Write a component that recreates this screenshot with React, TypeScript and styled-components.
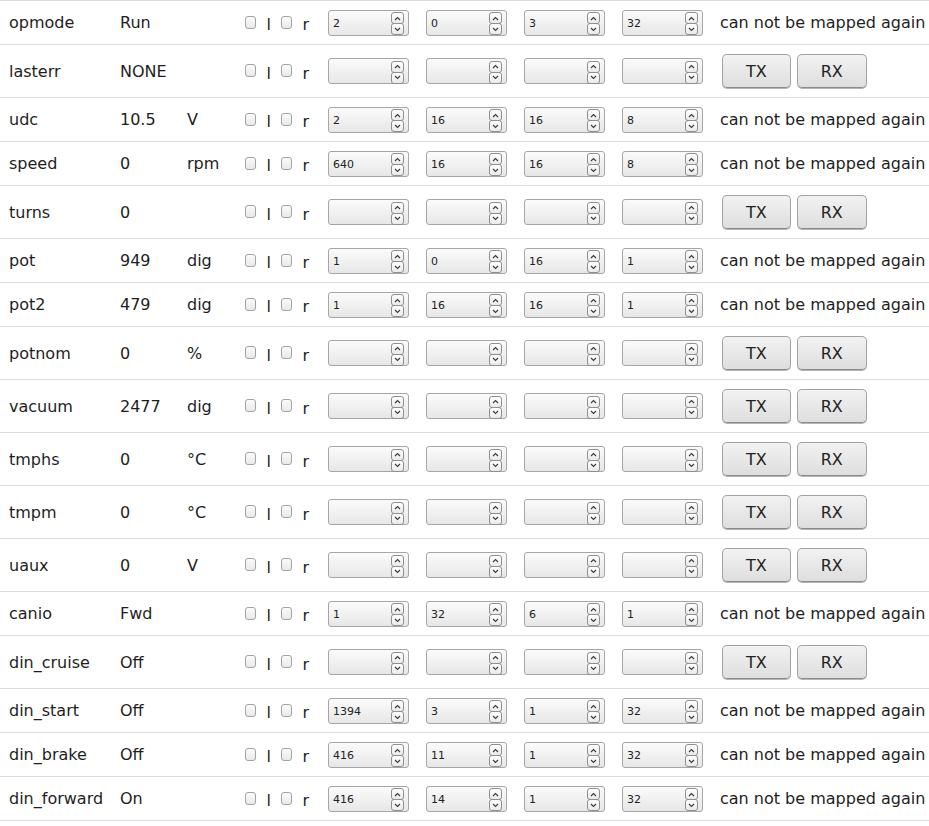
import React from "react";
import styled, { createGlobalStyle } from "styled-components";

const Global = createGlobalStyle`
  html, body { margin: 0; padding: 0; background: #fff; }
  body {
    font-family: "DejaVu Sans", "Noto Sans", sans-serif;
    font-size: 16px;
    color: #1e1e1e;
  }
`;

type Param = {
  name: string;
  value: string;
  unit: string;
  map?: [string, string, string, string];
};

const params: Param[] = [
  { name: "opmode", value: "Run", unit: "", map: ["2", "0", "3", "32"] },
  { name: "lasterr", value: "NONE", unit: "" },
  { name: "udc", value: "10.5", unit: "V", map: ["2", "16", "16", "8"] },
  { name: "speed", value: "0", unit: "rpm", map: ["640", "16", "16", "8"] },
  { name: "turns", value: "0", unit: "" },
  { name: "pot", value: "949", unit: "dig", map: ["1", "0", "16", "1"] },
  { name: "pot2", value: "479", unit: "dig", map: ["1", "16", "16", "1"] },
  { name: "potnom", value: "0", unit: "%" },
  { name: "vacuum", value: "2477", unit: "dig" },
  { name: "tmphs", value: "0", unit: "°C" },
  { name: "tmpm", value: "0", unit: "°C" },
  { name: "uaux", value: "0", unit: "V" },
  { name: "canio", value: "Fwd", unit: "", map: ["1", "32", "6", "1"] },
  { name: "din_cruise", value: "Off", unit: "" },
  { name: "din_start", value: "Off", unit: "", map: ["1394", "3", "1", "32"] },
  { name: "din_brake", value: "Off", unit: "", map: ["416", "11", "1", "32"] },
  { name: "din_forward", value: "On", unit: "", map: ["416", "14", "1", "32"] },
];

const Table = styled.div`
  width: 929px;
  border-top: 1px solid #dcdcdc;
`;

const Row = styled.div<{ $tall: boolean }>`
  display: grid;
  grid-template-columns: 111px 67px 58px 83px 98px 98px 98px 98px 1fr;
  align-items: center;
  height: ${(p) => (p.$tall ? 52 : 43)}px;
  border-bottom: 1px solid #dcdcdc;
`;

const Cell = styled.div`
  padding-left: 9px;
  white-space: nowrap;
  display: flex;
  align-items: center;
`;

const FlagCell = styled.div`
  padding-left: 9px;
  display: flex;
  align-items: center;
  height: 100%;
`;

const Check = styled.span`
  display: inline-block;
  box-sizing: border-box;
  width: 13px;
  height: 13px;
  border: 1px solid #a3a3a3;
  border-radius: 3px;
  background: linear-gradient(#fbfbfb, #e9e9e9);
  margin-top: -1px;
`;

const FlagLabel = styled.span`
  margin: 5px 10px 0 10px;
  line-height: 1;
`;

const Spin = styled.div`
  box-sizing: border-box;
  width: 81px;
  height: 26px;
  border: 1px solid #a6a6a6;
  border-radius: 3px;
  background: linear-gradient(#fbfbfb, #e7e7e7);
  display: flex;
  align-items: center;
  padding: 0 4px 0 4px;
`;

const SpinValue = styled.span`
  flex: 1;
  font-size: 11px;
  color: #222;
  padding-top: 1px;
`;

const Arrows = styled.div`
  display: flex;
  flex-direction: column;
  margin-top: 2px;
`;

const ArrowBox = styled.span`
  box-sizing: border-box;
  width: 13px;
  height: 12px;
  border: 1px solid #8f8f8f;
  border-radius: 3px;
  background: linear-gradient(#ffffff, #eaeaea);
  display: flex;
  align-items: center;
  justify-content: center;
  & + & {
    margin-top: -1px;
  }
`;

const Btn = styled.button`
  box-sizing: border-box;
  height: 34px;
  padding: 0 23px;
  font-family: "DejaVu Sans", sans-serif;
  font-size: 16px;
  color: #222;
  border: 1px solid #a2a2a2;
  border-bottom-color: #8a8a8a;
  border-radius: 5px;
  background: linear-gradient(#f2f2f2, #dedede);
  box-shadow: 0 1px 0 #b5b5b5;
  margin-left: 2px;
  margin-right: 4px;
  cursor: pointer;
`;

const Note = styled.span``;

function Chevron({ up }: { up: boolean }) {
  return (
    <svg width="7" height="5" viewBox="0 0 7 5">
      <polyline
        points={up ? "1,4 3.5,1.5 6,4" : "1,1 3.5,3.5 6,1"}
        fill="none"
        stroke="#3a3a3a"
        strokeWidth="1.1"
      />
    </svg>
  );
}

function Spinner({ value }: { value?: string }) {
  return (
    <Spin>
      <SpinValue>{value ?? ""}</SpinValue>
      <Arrows>
        <ArrowBox>
          <Chevron up />
        </ArrowBox>
        <ArrowBox>
          <Chevron up={false} />
        </ArrowBox>
      </Arrows>
    </Spin>
  );
}

export default function App() {
  return (
    <>
      <Global />
      <Table>
        {params.map((p) => {
          const tall = !p.map;
          return (
            <Row key={p.name} $tall={tall}>
              <Cell>{p.name}</Cell>
              <Cell>{p.value}</Cell>
              <Cell>{p.unit}</Cell>
              <FlagCell>
                <Check />
                <FlagLabel>l</FlagLabel>
                <Check />
                <FlagLabel>r</FlagLabel>
              </FlagCell>
              {[0, 1, 2, 3].map((i) => (
                <Cell key={i}>
                  <Spinner value={p.map ? p.map[i] : undefined} />
                </Cell>
              ))}
              <Cell>
                {p.map ? (
                  <Note>can not be mapped again</Note>
                ) : (
                  <>
                    <Btn>TX</Btn>
                    <Btn>RX</Btn>
                  </>
                )}
              </Cell>
            </Row>
          );
        })}
      </Table>
    </>
  );
}
